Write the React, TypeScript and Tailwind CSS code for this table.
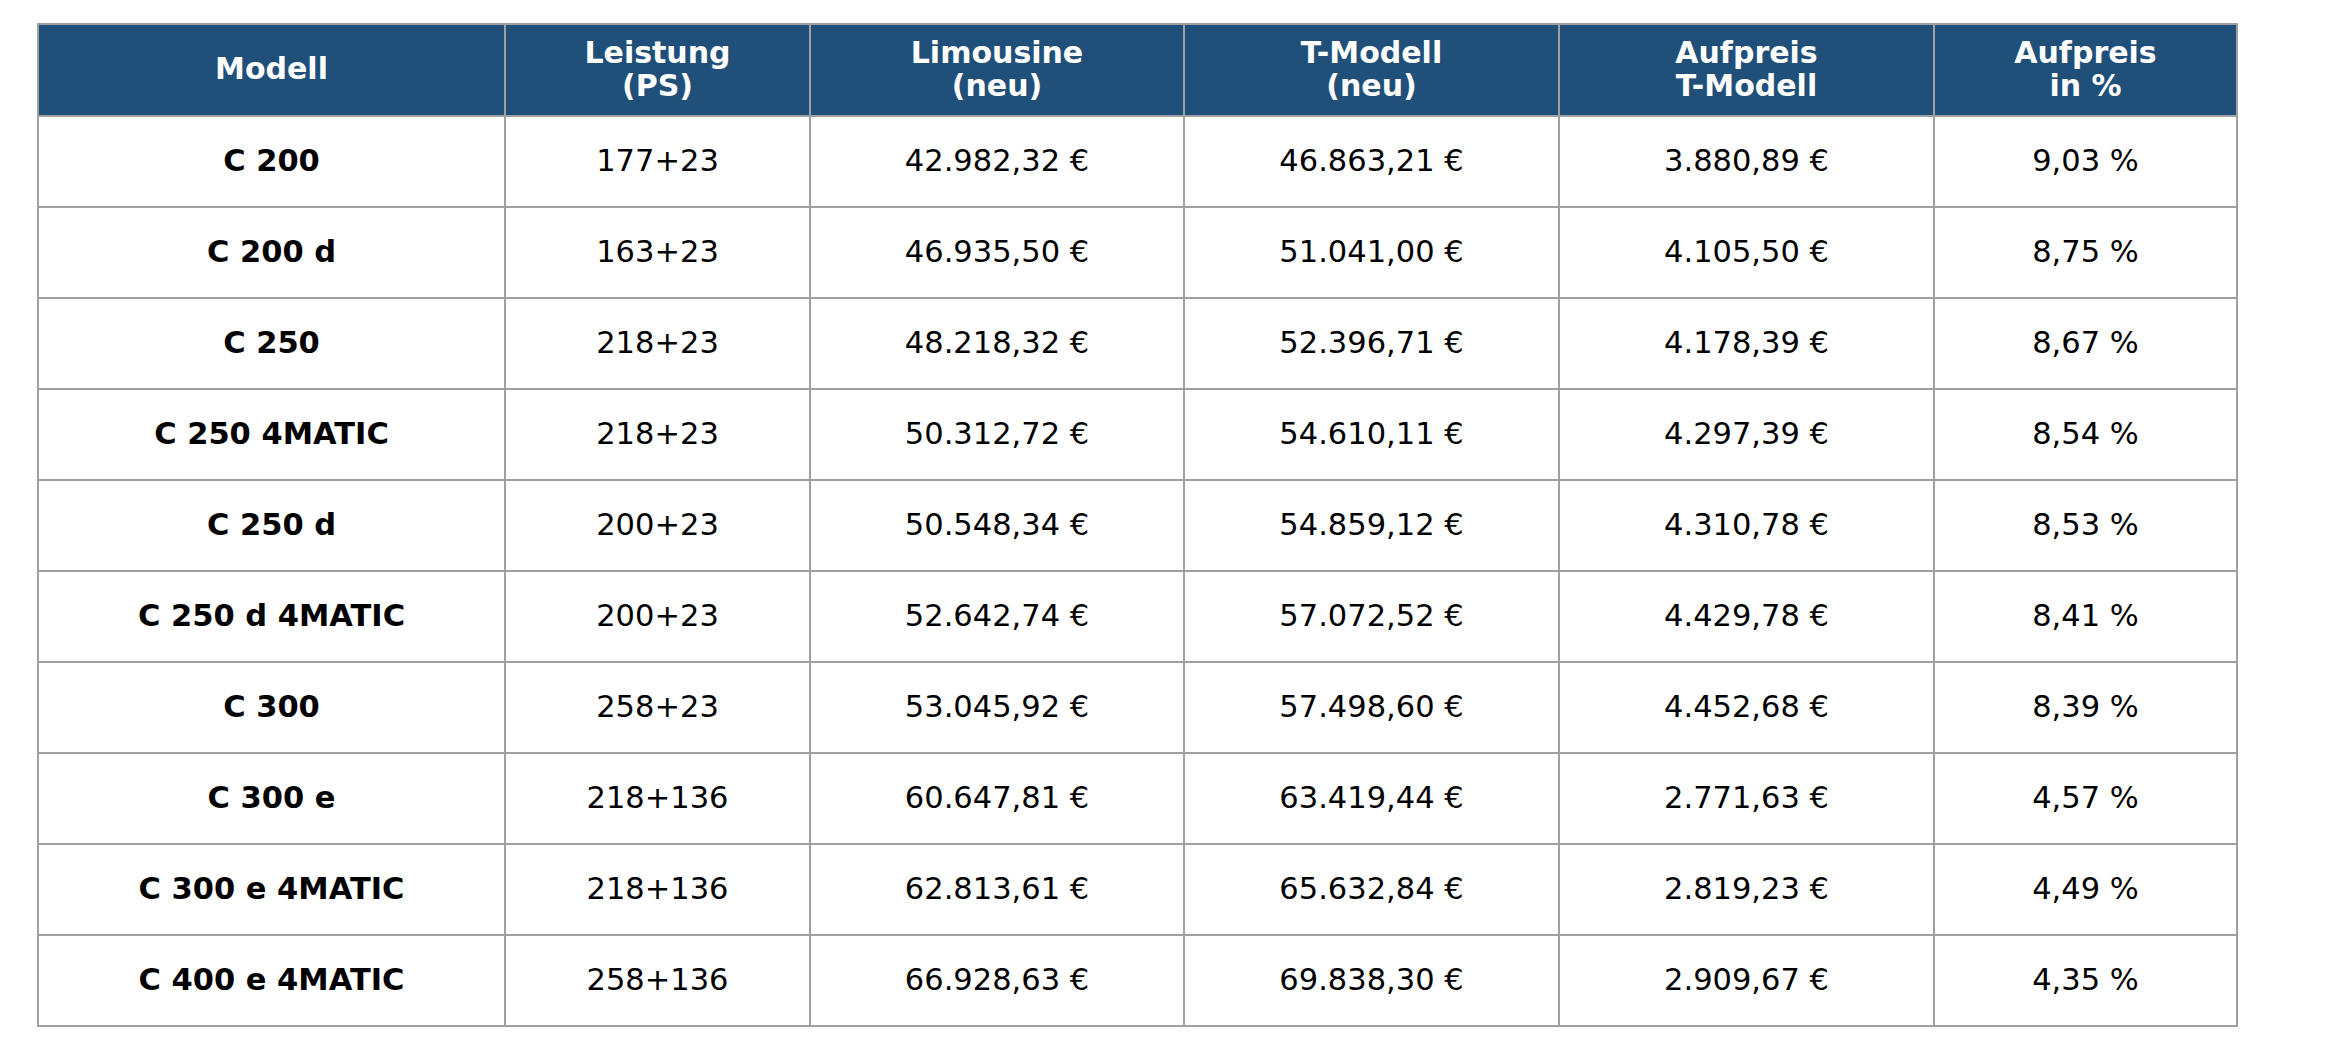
const headers = [
  ['Modell'],
  ['Leistung', '(PS)'],
  ['Limousine', '(neu)'],
  ['T-Modell', '(neu)'],
  ['Aufpreis', 'T-Modell'],
  ['Aufpreis', 'in %'],
]

const widths = ['w-[467px]', 'w-[305px]', 'w-[374px]', 'w-[375px]', 'w-[375px]', 'w-[303px]']

const rows = [
  ['C 200', '177+23', '42.982,32 €', '46.863,21 €', '3.880,89 €', '9,03 %'],
  ['C 200 d', '163+23', '46.935,50 €', '51.041,00 €', '4.105,50 €', '8,75 %'],
  ['C 250', '218+23', '48.218,32 €', '52.396,71 €', '4.178,39 €', '8,67 %'],
  ['C 250 4MATIC', '218+23', '50.312,72 €', '54.610,11 €', '4.297,39 €', '8,54 %'],
  ['C 250 d', '200+23', '50.548,34 €', '54.859,12 €', '4.310,78 €', '8,53 %'],
  ['C 250 d 4MATIC', '200+23', '52.642,74 €', '57.072,52 €', '4.429,78 €', '8,41 %'],
  ['C 300', '258+23', '53.045,92 €', '57.498,60 €', '4.452,68 €', '8,39 %'],
  ['C 300 e', '218+136', '60.647,81 €', '63.419,44 €', '2.771,63 €', '4,57 %'],
  ['C 300 e 4MATIC', '218+136', '62.813,61 €', '65.632,84 €', '2.819,23 €', '4,49 %'],
  ['C 400 e 4MATIC', '258+136', '66.928,63 €', '69.838,30 €', '2.909,67 €', '4,35 %'],
]

export default function App() {
  return (
    <div className="min-h-screen bg-white pl-[37px] pt-[23px] font-['DejaVu_Sans',sans-serif]">
      <table className="table-fixed border-collapse">
        <colgroup>
          {widths.map((w, i) => (
            <col key={i} className={w} />
          ))}
        </colgroup>
        <thead>
          <tr className="h-[92px] bg-[#20507a]">
            {headers.map((h, i) => (
              <th
                key={i}
                className="border-[2.5px] border-[#a0a0a0] p-0 pb-[3px] text-center align-middle text-[30px] font-bold leading-[33px] text-white"
              >
                {h.map((line, j) => (
                  <div key={j}>{line}</div>
                ))}
              </th>
            ))}
          </tr>
        </thead>
        <tbody>
          {rows.map((r, i) => (
            <tr key={i} className="h-[91px] bg-white">
              {r.map((c, j) => (
                <td
                  key={j}
                  className={
                    j === 0
                      ? 'border-[2.5px] border-[#a0a0a0] p-0 pb-[2px] text-center align-middle text-[30.5px] font-bold text-black'
                      : 'border-[2.5px] border-[#a0a0a0] p-0 pb-[2px] text-center align-middle text-[30.5px] text-black'
                  }
                >
                  {c}
                </td>
              ))}
            </tr>
          ))}
        </tbody>
      </table>
    </div>
  )
}
